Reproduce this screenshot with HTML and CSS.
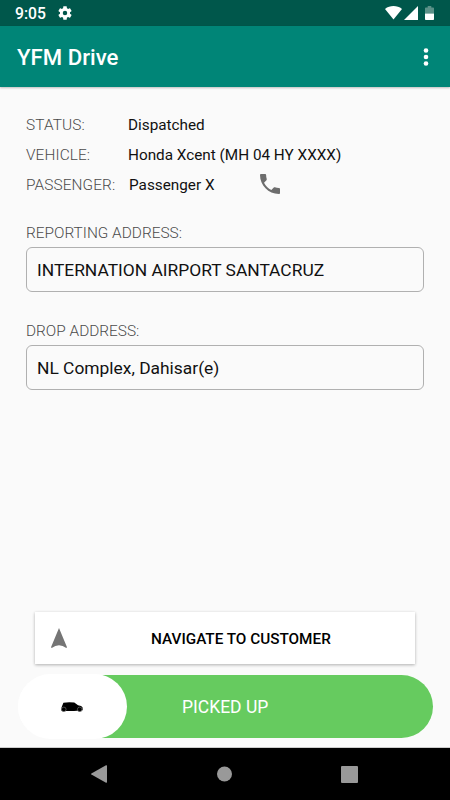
FILE: index.html
```html
<!DOCTYPE html>
<html lang="en">
<head>
  <meta charset="UTF-8" />
  <meta name="viewport" content="width=device-width, initial-scale=1.0"/>
  <title>YFM Drive</title>
  <link rel="stylesheet" href="styles.css">
</head>
<body>
  <div class="status-bar">
    <span class="time">9:05</span>
    <svg class="gear" viewBox="2 2 20 20"><path d="M19.14 12.94c.04-.3.06-.61.06-.94 0-.32-.02-.64-.07-.94l2.03-1.58c.18-.14.23-.41.12-.61l-1.92-3.32c-.12-.22-.37-.29-.59-.22l-2.39.96c-.5-.38-1.03-.7-1.62-.94l-.36-2.54c-.04-.24-.24-.41-.48-.41h-3.84c-.24 0-.43.17-.47.41l-.36 2.54c-.59.24-1.13.57-1.62.94l-2.39-.96c-.22-.08-.47 0-.59.22L2.74 8.87c-.12.21-.08.47.12.61l2.03 1.58c-.05.3-.09.63-.09.94s.02.64.07.94l-2.03 1.58c-.18.14-.23.41-.12.61l1.92 3.32c.12.22.37.29.59.22l2.39-.96c.5.38 1.03.7 1.62.94l.36 2.54c.05.24.24.41.48.41h3.84c.24 0 .44-.17.47-.41l.36-2.54c.59-.24 1.13-.56 1.62-.94l2.39.96c.22.08.47 0 .59-.22l1.92-3.32c.12-.22.07-.47-.12-.61l-2.01-1.58zM12 15.2A3.2 3.2 0 1 1 12 8.8a3.2 3.2 0 0 1 0 6.4z"/></svg>
    <div class="signals">
      <svg width="17" height="14" viewBox="0 0 17 14"><path d="M0 2.9C5-.9 12-.9 17 2.900L8.500 13.500z"/></svg>
      <svg width="14" height="14" viewBox="0 0 14 14"><path d="M14 0v14H0z"/></svg>
      <svg class="battery" width="9" height="14" viewBox="0 0 9 14">
        <path class="battery-empty" d="M2.7 0h3.6v1.4H8.2q.8 0 .8.8V7.5H0V2.2q0-.8.8-.8h1.9z"/>
        <path d="M0 7.5h9v5.7q0 .8-.8.8H.8q-.8 0-.8-.8z"/>
      </svg>
    </div>
  </div>

  <header class="app-bar">
    <h1>YFM Drive</h1>
    <svg width="6" height="20" viewBox="0 0 6 20"><circle cx="3" cy="3.5" r="2.3"/><circle cx="3" cy="10" r="2.3"/><circle cx="3" cy="16.5" r="2.3"/></svg>
  </header>

  <main class="content">
    <div class="row"><span class="label">STATUS:</span><span class="value">Dispatched</span></div>
    <div class="row"><span class="label">VEHICLE:</span><span class="value">Honda Xcent (MH 04 HY XXXX)</span></div>
    <div class="row passenger">
      <span class="label">PASSENGER:</span><span class="value">Passenger X</span>
      <svg class="phone" viewBox="3 3 18 18"><path d="M6.62 10.79c1.44 2.83 3.76 5.14 6.59 6.59l2.2-2.2c.27-.27.67-.36 1.02-.24 1.12.37 2.33.57 3.57.57.55 0 1 .45 1 1V20c0 .55-.45 1-1 1-9.39 0-17-7.61-17-17 0-.55.45-1 1-1h3.5c.55 0 1 .45 1 1 0 1.25.2 2.45.57 3.57.11.35.03.74-.25 1.02l-2.2 2.2z"/></svg>
    </div>

    <section class="address">
      <div class="label">REPORTING ADDRESS:</div>
      <div class="box">INTERNATION AIRPORT SANTACRUZ</div>
    </section>
    <section class="address">
      <div class="label">DROP ADDRESS:</div>
      <div class="box">NL Complex, Dahisar(e)</div>
    </section>

    <button class="navigate">
      <svg width="16" height="20" viewBox="0 0 16 20"><path d="M8 0L16 19.3l-.7.7Q8 14.6.7 20L0 19.3z"/></svg>
      <span>NAVIGATE TO CUSTOMER</span>
    </button>

    <div class="slider">
      <div class="thumb">
        <svg width="22" height="10" viewBox="0 0 22 10">
          <path d="M2.4.7Q8-.2 13.300.6L17 3.300Q20.800 3.800 21.500 5.200L21.800 8.300 13 8.900H.5V5.500z"/>
          <g class="wheels"><circle cx="2.800" cy="7.400" r="2.300"/><circle cx="18.700" cy="7.400" r="2.300"/></g>
        </svg>
      </div>
      <span class="slider-text">PICKED UP</span>
    </div>
  </main>

  <nav class="nav-bar">
    <svg width="16" height="18" viewBox="0 0 16 18"><path d="M15 .3Q16 0 16 1v16q0 1-1 .7L.4 9.5Q-.2 9 .4 8.5z"/></svg>
    <svg width="16" height="16" viewBox="0 0 16 16"><circle cx="8.500" cy="8" r="7.500"/></svg>
    <svg width="17" height="17" viewBox="0 0 17 17"><rect width="17" height="17" rx="1"/></svg>
  </nav>
</body>
</html>
```

FILE: styles.css
```css
* {
  box-sizing: border-box;
  margin: 0;
  padding: 0;
}

body {
  width: 450px;
  height: 800px;
  font-family: Roboto, sans-serif;
  display: flex;
  flex-direction: column;
  background-color: #fafafa;
  overflow: hidden;
}

svg {
  display: block;
  flex: none;
}

.status-bar {
  height: 26px;
  padding: 0 16px 0 15px;
  background-color: #00574b;
  color: white;
  fill: white;
  display: flex;
  align-items: center;
}

.time {
  width: 43px;
  font-size: 15.7px;
  font-weight: 500;
  line-height: 26px;
  padding-top: 2px;
}

.gear {
  width: 14px;
  height: 14px;
}

.signals {
  display: flex;
  align-items: center;
  gap: 2px;
  margin-left: auto;
}

.battery {
  margin-left: 5px;
}

.battery-empty {
  fill: #5b9188;
}

.app-bar {
  height: 61px;
  padding: 0 21px 0 17px;
  background-color: #008577;
  color: white;
  fill: white;
  display: flex;
  align-items: center;
  justify-content: space-between;
  box-shadow: 0 1px 2px rgba(0, 0, 0, 0.25);
}

.app-bar h1 {
  font-size: 22.2px;
  font-weight: 500;
  padding-top: 1px;
}

.content {
  flex: 1;
  padding: 23px 26px 0;
  display: flex;
  flex-direction: column;
}

.row {
  display: flex;
  align-items: center;
  height: 30px;
}

.label {
  width: 102px;
  font-size: 15.4px;
  font-weight: 300;
  color: #4a4a4a;
  white-space: nowrap;
}

.row .label {
  letter-spacing: 0.1px;
}

.value {
  font-size: 15.3px;
  color: #111;
  white-space: nowrap;
}

.passenger .value {
  width: 132px;
  padding-left: 1px;
}

.phone {
  width: 20px;
  height: 20px;
  margin-bottom: 2px;
  fill: #6d6d6d;
}

.address {
  padding-top: 23px;
  height: 98px;
}

.address .label {
  line-height: 20px;
}

.box {
  height: 45px;
  margin-top: 4px;
  padding: 0 10px;
  border: 1px solid #b0b0b0;
  border-radius: 6px;
  font-size: 17.4px;
  line-height: 44px;
  color: #111;
}

.navigate {
  width: 380px;
  height: 52px;
  margin: auto 0 11px 9px;
  padding: 0 16px;
  display: flex;
  align-items: center;
  background-color: white;
  border: none;
  box-shadow: 0 1px 3px rgba(0, 0, 0, 0.3);
  font-family: inherit;
  font-size: 15.3px;
  font-weight: 500;
  color: black;
}

.navigate svg {
  fill: #757575;
}

.navigate span {
  margin-left: 84px;
  padding-top: 1px;
  white-space: nowrap;
}

.slider {
  width: 415px;
  height: 63px;
  margin: 0 0 10px -8px;
  border-radius: 32px;
  background: linear-gradient(to right, white 60px, #66cb5f 60px);
  display: flex;
  align-items: center;
}

.thumb {
  width: 109px;
  height: 65px;
  padding-right: 1px;
  border-radius: 33px;
  background-color: white;
  display: flex;
  align-items: center;
  justify-content: center;
}

.wheels {
  stroke: #999;
  stroke-width: 0.5px;
}

.slider-text {
  margin-left: 55px;
  padding-top: 1px;
  font-size: 17.5px;
  color: white;
}

.nav-bar {
  height: 52px;
  padding: 0 92px 0 91px;
  background-color: black;
  fill: #999;
  display: flex;
  align-items: center;
  justify-content: space-between;
  box-shadow: 0 -1px 0 #ccc;
}
```
